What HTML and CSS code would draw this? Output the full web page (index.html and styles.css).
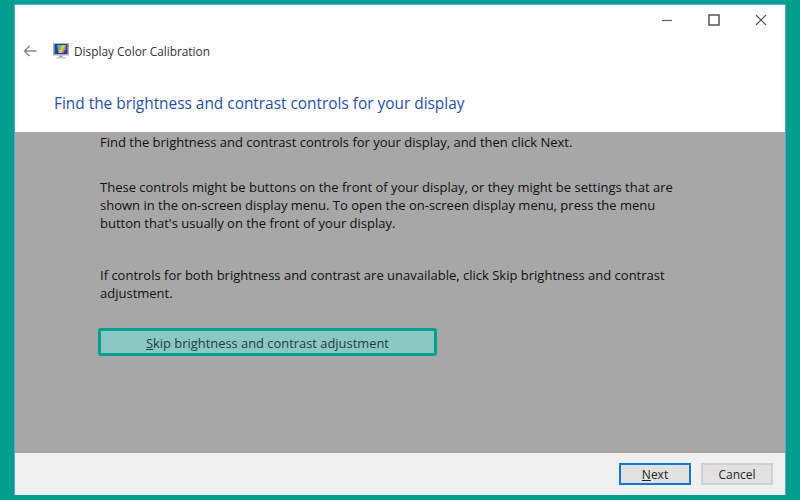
FILE: index.html
```html
<!DOCTYPE html>
<html lang="en">
<head>
<meta charset="utf-8">
<title>Display Color Calibration</title>
<link rel="stylesheet" href="styles.css">
</head>
<body>
<div class="window">
  <header class="header">
    <div class="controls">
      <svg class="ctl" width="12" height="12" viewBox="0 0 12 12"><path d="M1 6.5h10" stroke="#666" stroke-width="1.3" fill="none"/></svg>
      <svg class="ctl" width="12" height="12" viewBox="0 0 12 12"><rect x="1" y="1" width="10" height="10" stroke="#555" stroke-width="1.5" fill="none"/></svg>
      <svg class="ctl" width="12" height="12" viewBox="0 0 12 12"><path d="M1 1l10 10M11 1L1 11" stroke="#555" stroke-width="1.2" fill="none"/></svg>
    </div>
    <div class="nav">
      <svg class="back" width="14" height="12" viewBox="0 0 14 12"><path d="M13.5 6H1.5M6.5 1L1.5 6l5 5" stroke="#8a8a8a" stroke-width="1.5" fill="none"/></svg>
      <svg class="appicon" width="16" height="16" viewBox="0 0 16 16">
        <defs><linearGradient id="rb" x1="0" y1="0" x2="1" y2="0.4"><stop offset="0" stop-color="#2fa8e0"/><stop offset=".35" stop-color="#4cc070"/><stop offset=".65" stop-color="#e8d040"/><stop offset="1" stop-color="#e04a80"/></linearGradient></defs>
        <rect x="0" y="0" width="16" height="12.5" fill="#aeb2b6"/>
        <rect x="1.5" y="1" width="13" height="10" fill="#2438b8"/>
        <path d="M4 2h9v4.5L10 10H5.5z" fill="url(#rb)"/>
        <rect x="6" y="12.5" width="4" height="1.5" fill="#a9adb2"/>
        <rect x="3.5" y="14" width="9" height="1.5" fill="#c4c7ca"/>
      </svg>
      <span class="apptitle">Display Color Calibration</span>
    </div>
    <h1 class="heading">Find the brightness and contrast controls for your display</h1>
  </header>
  <main class="content">
    <p class="line first">Find the brightness and contrast controls for your display, and then click Next.</p>
    <p class="line para2">These controls might be buttons on the front of your display, or they might be settings that are<br>shown in the on-screen display menu. To open the on-screen display menu, press the menu<br>button that's usually on the front of your display.</p>
    <p class="line para3">If controls for both brightness and contrast are unavailable, click Skip brightness and contrast<br>adjustment.</p>
    <div class="skip"><span class="skiptext"><u>S</u>kip brightness and contrast adjustment</span></div>
  </main>
  <footer class="footer">
    <div class="btn primary"><span><u>N</u>ext</span></div>
    <div class="btn">Cancel</div>
  </footer>
</div>
</body>
</html>
```

FILE: styles.css
```css
html, body { margin: 0; padding: 0; }
body {
  width: 800px;
  height: 500px;
  box-sizing: border-box;
  padding: 4px 14px 5px 14px;
  background: #00a08f;
  font-family: "Open Sans", "Noto Sans", sans-serif;
  overflow: hidden;
}
.window {
  height: 100%;
  display: flex;
  flex-direction: column;
  background: #fff;
  border: 1px solid #5aa6e0;
  border-bottom: 0;
  box-sizing: border-box;
}
.header {
  height: 127px;
  flex: none;
  background: #fff;
  display: flex;
  flex-direction: column;
}
.controls {
  display: flex;
  justify-content: flex-end;
  gap: 35px;
  padding: 9px 18px 0 0;
  height: 12px;
}
.nav {
  display: flex;
  align-items: center;
  margin-top: 15px;
  height: 20px;
  padding-left: 8px;
}
.back { margin-right: 16px; }
.appicon { margin-right: 5px; }
.apptitle { font-size: 11.85px; color: #333; }
.heading {
  margin: 33px 0 0 39px;
  font-size: 15.4px;
  line-height: 20px;
  font-weight: 400;
  color: #1f4fb5;
}
.content {
  flex: 1;
  background: #a7a7a7;
  padding: 1px 0 0 85px;
  color: #111;
}
.line {
  margin: 0;
  font-size: 13px;
  line-height: 18px;
}
.para2 { margin-top: 27px; }
.para3 { margin-top: 34px; }
.skip {
  margin: 26px 0 0 -2px;
  width: 339px;
  height: 28px;
  box-sizing: border-box;
  border: 3px solid #00a08f;
  border-radius: 3px;
  background: #8bc8c3;
  color: #1c3f42;
  font-size: 12.9px;
  display: flex;
  align-items: center;
  padding-left: 45px;
}
.skiptext { padding-top: 2px; }
.footer {
  flex: none;
  height: 42px;
  background: #f0f0f0;
  display: flex;
  justify-content: flex-end;
  align-items: center;
  gap: 10px;
  padding-right: 12px;
}
.btn {
  width: 72px;
  height: 22px;
  box-sizing: border-box;
  border: 2px solid #d0d0d0;
  background: #e1e1e1;
  color: #222;
  font-size: 12px;
  display: flex;
  align-items: center;
  justify-content: center;
}
.primary { border-color: #0f78d6; }
```
